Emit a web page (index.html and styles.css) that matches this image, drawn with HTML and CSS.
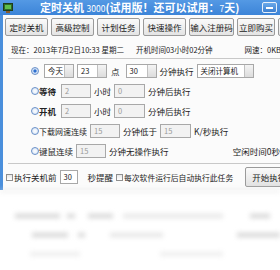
FILE: index.html
```html
<!DOCTYPE html>
<html lang="zh-CN">
<head>
    <meta charset="UTF-8">
    <title>定时关机 3000</title>
    <link rel="stylesheet" href="styles.css">
</head>
<body>
    <div class="window">
        <div class="titlebar">
            <svg class="app-icon" width="10" height="10" viewBox="0 0 10 10">
                <rect x="0.5" y="0.5" width="9" height="7" fill="#2f6b2a" stroke="#1d3d1a" stroke-width="1"/>
                <rect x="2" y="2" width="6" height="4" fill="#5fbf4a"/>
                <rect x="3" y="8" width="4" height="2" fill="#8a5a2b"/>
            </svg>
            <span class="title">定时关机 <small>3000</small>(试用版！还可以试用：<small>7</small>天)</span>
            <span class="min-btn"><span></span></span>
        </div>

        <div class="body">
            <div class="tabs">
                <span class="tab">定时关机</span>
                <span class="tab">高级控制</span>
                <span class="tab">计划任务</span>
                <span class="tab">快速操作</span>
                <span class="tab wide">输入注册码</span>
                <span class="tab narrow">立即购买</span>
                <span class="tab">帮助</span>
            </div>

            <div class="info">
                <span class="now">现在：2013年7月2日10:33 星期二</span>
                <span class="uptime">开机时间03小时02分钟</span>
                <span class="speed">网速：0KB</span>
            </div>

            <div class="options">
                <div class="row">
                    <span class="radio checked"></span>
                    <span class="select w30">今天</span>
                    <span class="select w30">23</span>
                    <span class="unit">点</span>
                    <span class="select w31">30</span>
                    <span class="label">分钟执行</span>
                    <span class="select w57">关闭计算机</span>
                </div>
                <div class="row">
                    <span class="radio"></span>
                    <span class="label bold">等待</span>
                    <span class="input w30 ml2">2</span>
                    <span class="label">小时</span>
                    <span class="input w31">0</span>
                    <span class="label">分钟后执行</span>
                </div>
                <div class="row">
                    <span class="radio"></span>
                    <span class="label bold">开机</span>
                    <span class="input w30 ml2">2</span>
                    <span class="label">小时</span>
                    <span class="input w31">0</span>
                    <span class="label">分钟后执行</span>
                </div>
                <div class="row">
                    <span class="radio"></span>
                    <span class="label small">下载网速连续</span>
                    <span class="input w30">15</span>
                    <span class="label">分钟低于</span>
                    <span class="input w31">15</span>
                    <span class="label">K/秒执行</span>
                </div>
                <div class="row">
                    <span class="radio"></span>
                    <span class="label">键鼠连续</span>
                    <span class="input w30">15</span>
                    <span class="label">分钟无操作执行</span>
                    <span class="label idle">空闲时间0秒</span>
                </div>
            </div>

            <div class="bottom">
                <span class="check"></span>
                <span class="label">执行关机前</span>
                <span class="input w18 white">30</span>
                <span class="label spaced">秒提醒</span>
                <span class="check"></span>
                <span class="label tight">每次软件运行后自动执行此任务</span>
                <span class="start-btn">开始执行</span>
            </div>
        </div>
    </div>

    <div class="below">
        <div class="blur-row">
            <span class="blur b1"></span>
            <span class="blur b2"></span>
            <span class="blur b3"></span>
            <span class="blur b4"></span>
            <span class="blur b5"></span>
        </div>
        <div class="blur-row">
            <span class="blur b6"></span>
            <span class="blur b7"></span>
            <span class="blur b8"></span>
            <span class="blur b9"></span>
        </div>
        <div class="blur-row faint">
            <span class="blur b10"></span>
            <span class="blur b11"></span>
        </div>
    </div>
</body>
</html>
```

FILE: styles.css
```css
body {
    margin: 0;
    width: 280px;
    background-color: #ffffff;
    font-family: "Noto Sans CJK SC", "Noto Sans", sans-serif;
    font-size: 8.5px;
    color: #222;
    overflow: hidden;
}

.window {
    width: 277px;
    overflow: hidden;
    background-color: #4a8fdc;
    padding-left: 3px;
}

.titlebar {
    display: flex;
    align-items: center;
    height: 15px;
    background: linear-gradient(#5499e4, #3c84d8);
    margin-left: -3px;
    padding-left: 3px;
}

.app-icon {
    flex: none;
}

.title {
    margin-left: 27px;
    color: #ffffff;
    font-size: 11px;
    font-weight: bold;
    white-space: nowrap;
    line-height: 15px;
}

.title small {
    font-size: 8.5px;
    font-weight: normal;
}

.min-btn {
    flex: none;
    width: 13px;
    height: 9px;
    margin-left: auto;
    margin-right: 3px;
    border: 1px solid #e8f0fa;
    border-radius: 2px;
    background: linear-gradient(#6aa9ea, #3c7fd0);
    display: flex;
    align-items: center;
    justify-content: center;
}

.min-btn span {
    width: 7px;
    height: 2px;
    background-color: #ffffff;
}

.body {
    background-color: #fbfbfb;
    padding: 3px 0 0 2px;
}

.tabs {
    display: flex;
    gap: 3px;
    white-space: nowrap;
}

.tab {
    flex: none;
    box-sizing: border-box;
    width: 43px;
    height: 18px;
    line-height: 16px;
    text-align: center;
    border: 1px solid #9a9a9a;
    border-radius: 2px;
    background: linear-gradient(#fafafa, #e4e4e4);
}

.tab.wide {
    width: 45px;
}

.tab.narrow {
    width: 38px;
}

.info {
    display: flex;
    align-items: center;
    height: 18px;
    margin-top: 4px;
    margin-left: 3px;
    padding-left: 3px;
    font-size: 7.5px;
    white-space: nowrap;
    border-bottom: 1px solid #c8c8c8;
}

.uptime {
    margin-left: 12px;
}

.speed {
    margin-left: 32px;
}

.options {
    padding: 2px 0 2px 23px;
    margin-left: 3px;
    border-bottom: 1px solid #c8c8c8;
}

.row {
    display: flex;
    align-items: center;
    height: 20px;
    gap: 3px;
    white-space: nowrap;
}

.radio {
    flex: none;
    box-sizing: border-box;
    width: 8px;
    height: 8px;
    border: 1px solid #6a90c8;
    border-radius: 50%;
    background: radial-gradient(#ffffff, #cfe0f5);
    margin-right: -3px;
}

.radio.checked {
    background: radial-gradient(#2d6fd0 30%, #cfe0f5 45%);
    margin-right: 2px;
}

.bold {
    font-weight: bold;
}

.small {
    font-size: 8px;
}

.unit {
    margin: 0 3px 0 1px;
}

.ml2 {
    margin-left: 2px;
}

.select,
.input {
    flex: none;
    box-sizing: border-box;
    height: 14px;
    line-height: 12px;
    border: 1px solid #a8a8a8;
    padding-left: 3px;
    font-size: 7.5px;
    position: relative;
    background-color: #ffffff;
}

.input {
    background-color: #f2f2f2;
    color: #999;
}

.input.white {
    background-color: #ffffff;
    color: #222;
}

.select::after {
    content: "";
    position: absolute;
    right: 0;
    top: 0;
    bottom: 0;
    width: 8px;
    border-left: 1px solid #c0c0c0;
    background: linear-gradient(#f4f4f4, #dcdcdc);
}

.w18 { width: 18px; }
.w30 { width: 30px; }
.w31 { width: 31px; }
.w57 { width: 57px; }

.idle {
    margin-left: auto;
}

.bottom {
    display: flex;
    align-items: center;
    height: 26px;
    gap: 3px;
    padding-left: 1px;
    white-space: nowrap;
}

.spaced {
    margin-left: 7px;
}

.tight {
    font-size: 7.8px;
}

.check {
    flex: none;
    box-sizing: border-box;
    width: 7px;
    height: 7px;
    border: 1px solid #8f8f8f;
    background: linear-gradient(#e8e8e8, #ffffff);
    margin-right: -2px;
}

.start-btn {
    flex: none;
    height: 18px;
    line-height: 18px;
    padding: 0 6px;
    margin-left: 9px;
    border: 1px solid #9a9a9a;
    border-radius: 2px;
    background: linear-gradient(#fafafa, #e2e2e2);
}

.below {
    padding-top: 14px;
    filter: blur(2.5px);
    border-top: 2px solid #e8e8e8;
}

.blur-row {
    display: flex;
    height: 19px;
    align-items: center;
}

.blur {
    height: 4px;
    background-color: #d2d2d2;
}

.faint .blur {
    background-color: #ececec;
}

.b1 { width: 45px; margin-left: 15px; }
.b2 { width: 8px; margin-left: 7px; }
.b3 { width: 25px; margin-left: 13px; }
.b4 { width: 100px; margin-left: 10px; background-color: #e4e4e4; }
.b5 { width: 20px; margin-left: 27px; }
.b6 { width: 36px; margin-left: 32px; }
.b7 { width: 7px; margin-left: 10px; }
.b8 { width: 53px; margin-left: 25px; background-color: #e2e2e2; }
.b9 { width: 43px; margin-left: 74px; }
.b10 { width: 50px; margin-left: 30px; }
.b11 { width: 63px; margin-left: 80px; }
```
